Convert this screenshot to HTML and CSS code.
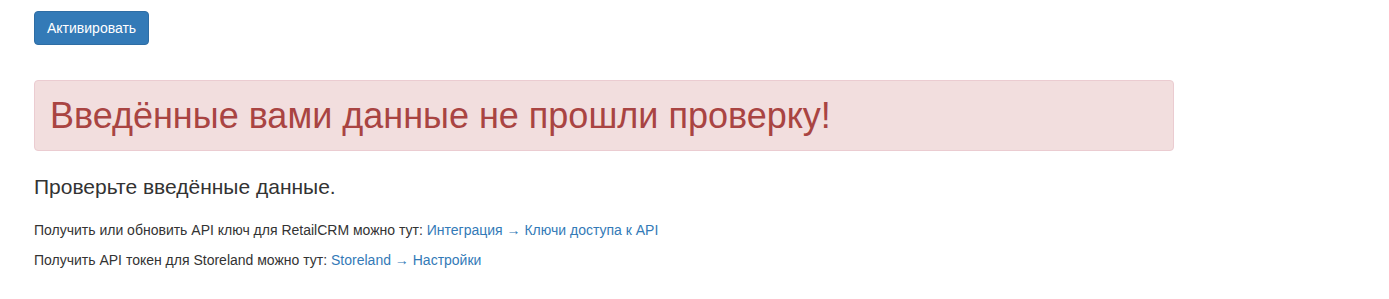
FILE: index.html
```html
<!DOCTYPE html>
<html lang="ru">
<head>
<meta charset="UTF-8">
<meta name="viewport" content="width=device-width, initial-scale=1.0">
<title>Активация</title>
<link rel="stylesheet" href="styles.css">
</head>
<body>

<div class="page">
  <form class="activate-form" onsubmit="return false">
    <button type="submit" class="btn btn-primary">Активировать</button>
  </form>

  <div class="alert alert-danger">
    <h1>Введённые вами данные не прошли проверку!</h1>
  </div>

  <p class="lead">Проверьте введённые данные.</p>

  <p class="hint">Получить или обновить API ключ для RetailCRM можно тут: <a href="#">Интеграция → Ключи доступа к API</a></p>
  <p class="hint">Получить API токен для Storeland можно тут: <a href="#">Storeland → Настройки</a></p>
</div>

</body>
</html>
```

FILE: styles.css
```css
html, body {
  margin: 0;
  font-family: "Liberation Sans", Arial, sans-serif;
  font-size: 14px;
  color: #333;
  background: #fff;
}
.page {
  width: 1140px;
  padding: 11px 0 0 34px;
}
.activate-form {
  margin: 0;
}
.btn {
  display: inline-block;
  height: 34px;
  padding: 6px 12px;
  font-family: inherit;
  font-size: 14px;
  line-height: 20px;
  border: 1px solid transparent;
  border-radius: 4px;
  cursor: pointer;
}
.btn-primary {
  color: #fff;
  background-color: #337ab7;
  border-color: #2e6da4;
}
.btn-primary:hover {
  background-color: #286090;
}
.alert {
  margin-top: 35px;
  padding: 15px;
  border: 1px solid transparent;
  border-radius: 4px;
}
.alert-danger {
  color: #a94442;
  background-color: #f2dede;
  border-color: #ebccd1;
}
.alert h1 {
  margin: 0;
  font-size: 36px;
  font-weight: 500;
  line-height: 39px;
}
.lead {
  margin: 26px 0 0;
  font-size: 21px;
  font-weight: 300;
  line-height: 20px;
}
.hint {
  margin: 23px 0 0;
  font-size: 14px;
  line-height: 20px;
}
.hint + .hint {
  margin-top: 10px;
}
a {
  color: #337ab7;
  text-decoration: none;
}
a:hover {
  text-decoration: underline;
}
```
